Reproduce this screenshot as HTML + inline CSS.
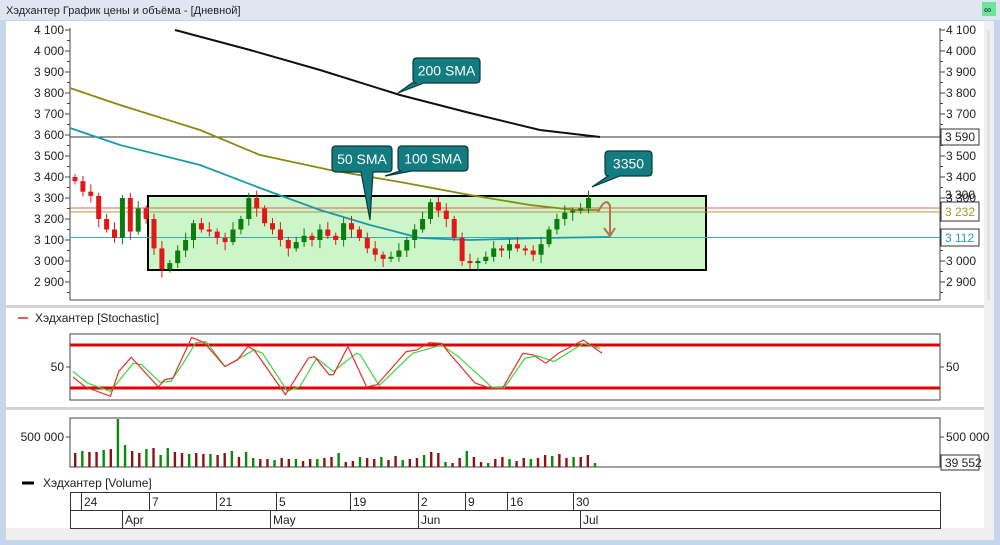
<!DOCTYPE html>
<html><head><meta charset="utf-8"><style>
html,body{margin:0;padding:0;width:1000px;height:545px;overflow:hidden;background:#c5d6ec;font-family:"Liberation Sans","DejaVu Sans",sans-serif}
svg{display:block}
text{font-family:"Liberation Sans","DejaVu Sans",sans-serif}
</style></head><body>
<svg id="s" width="1000" height="545" xmlns="http://www.w3.org/2000/svg">
<rect x="0" y="0" width="1000" height="545" fill="#c5d6ec"/>
<rect x="0" y="0" width="1000" height="20" fill="#dfe6f0"/>
<text x="6" y="14" font-size="11" fill="#222">Хэдхантер График цены и объёма - [Дневной]</text>
<rect x="982" y="2" width="14" height="14" fill="#6ee39a"/>
<text x="984" y="13" font-size="10" fill="#115">∞</text>
<rect x="6" y="21" width="978" height="512" fill="#ffffff"/>
<rect x="984" y="21" width="10" height="512" fill="#f0f0f0"/>
<rect x="987" y="30" width="3" height="270" fill="#e2e2e2"/>
<rect x="6" y="528" width="988" height="12" fill="#efefef"/>
<rect x="6" y="305" width="978" height="3" fill="#d4d4d4"/>
<rect x="6" y="407" width="978" height="3" fill="#d4d4d4"/>
<g id="g"></g>
</svg>
<script>
const NS="http://www.w3.org/2000/svg",G=document.getElementById("g");
function el(t,a,txt){const e=document.createElementNS(NS,t);for(const k in a)e.setAttribute(k,a[k]);if(txt!=null)e.textContent=txt;G.appendChild(e);return e;}
const L=70,R=940;
const Y=v=>30+(4100-v)*0.21;
// main plot frame
el("line",{x1:L,y1:28,x2:L,y2:300,stroke:"#444"});
el("line",{x1:R,y1:28,x2:R,y2:300,stroke:"#444"});
el("line",{x1:L,y1:300,x2:R,y2:300,stroke:"#444"});
for(let v=2900;v<=4100;v+=100){const y=Y(v);const s=v.toString().replace(/(\d)(\d{3})$/,"$1 $2");
 el("line",{x1:L-5,y1:y,x2:L,y2:y,stroke:"#444"});el("line",{x1:R,y1:y,x2:R+5,y2:y,stroke:"#444"});
 el("line",{x1:L-3,y1:y+10.5,x2:L,y2:y+10.5,stroke:"#444"});el("line",{x1:R,y1:y+10.5,x2:R+3,y2:y+10.5,stroke:"#444"});
 el("text",{x:L-6,y:y+4,"font-size":12,"text-anchor":"end",fill:"#222"},s);
 if(v!=3600&&v!=3100&&v!=3200)el("text",{x:R+6,y:y+4,"font-size":12,fill:"#222"},s);}
// green box
el("rect",{x:148,y:196,width:558,height:74,fill:"#ccf5c8",stroke:"#000","stroke-width":2});
// horizontal lines
el("line",{x1:L,y1:137,x2:R,y2:137,stroke:"#333"});
el("line",{x1:L,y1:208,x2:R,y2:208,stroke:"#e06060"});
el("line",{x1:L,y1:212,x2:R,y2:212,stroke:"#a8a040"});
el("line",{x1:L,y1:237.5,x2:R,y2:237.5,stroke:"#3aaab8"});
el("rect",{x:941,y:129,width:38,height:16,fill:"#fff",stroke:"#333"});
el("text",{x:945,y:141,"font-size":12,fill:"#222"},"3 590");
el("text",{x:945,y:199,"font-size":12,fill:"#222"},"3 300");
el("rect",{x:941,y:202,width:38,height:19,fill:"#fff",stroke:"#333"});
el("text",{x:945,y:216,"font-size":12,fill:"#a09830"},"3 232");
el("rect",{x:941,y:229,width:38,height:17,fill:"#fff",stroke:"#333"});
el("text",{x:945,y:242,"font-size":12,fill:"#2aa0b0"},"3 112");
// SMAs
const pl=(pts,c,w)=>el("polyline",{points:pts.map(p=>p.join(",")).join(" "),fill:"none",stroke:c,"stroke-width":w});
pl([[175,30],[250,50],[320,70],[400,95],[470,113],[540,130],[600,137]],"#111",2);
pl([[70,88],[120,105],[200,130],[260,155],[330,170],[400,182],[470,195],[530,205],[575,210],[600,210]],"#8a8a10",1.8);
pl([[70,128],[120,145],[200,165],[260,188],[320,210],[370,225],[420,238],[470,240],[540,238],[610,237]],"#1a9aaa",1.8);
// candles
const cl=[3380,3330,3310,3200,3150,3110,3300,3140,3250,3200,3060,2960,2990,3050,3100,3180,3150,3140,3110,3090,3150,3200,3300,3250,3180,3150,3100,3060,3090,3120,3100,3150,3120,3100,3180,3150,3110,3060,3030,3010,3020,3050,3100,3150,3200,3280,3240,3200,3110,3000,2990,3000,3020,3060,3050,3080,3060,3050,3030,3080,3150,3200,3230,3240,3250,3300];
let prev=3400;
cl.forEach((c,i)=>{const x=75+i*7.9;const o=prev;const up=c>=o;const col=up?"#0a7d0a":"#e01818";
 const hi=Math.max(o,c)+15+(i%3)*10,lo=Math.min(o,c)-15-(i%4)*8;
 el("line",{x1:x,y1:Y(hi),x2:x,y2:Y(lo),stroke:col});
 el("rect",{x:x-2.5,y:Y(Math.max(o,c)),width:5,height:Math.max(2,Math.abs(Y(o)-Y(c))),fill:col});prev=c;});
// brown arrow
el("path",{d:"M598 212 Q606 196 610 206 L610 236 M604 228 L610 236 L615 228",fill:"none",stroke:"#b87050","stroke-width":2});
// callouts
function co(x,y,w,h,t,px,py,ax){el("path",{d:`M${x+4} ${y}H${x+w-4}Q${x+w} ${y} ${x+w} ${y+4}V${y+h-4}Q${x+w} ${y+h} ${x+w-4} ${y+h}H${ax+12}L${px} ${py}L${ax} ${y+h}H${x+4}Q${x} ${y+h} ${x} ${y+h-4}V${y+4}Q${x} ${y} ${x+4} ${y}Z`,fill:"#127c80",stroke:"#0a3a3a","stroke-width":1.2});
 el("text",{x:x+w/2,y:y+h/2+5,"font-size":14,"text-anchor":"middle",fill:"#fff"},t);}
co(413,58,67,25,"200 SMA",398,93,412);
co(332,146,60,26,"50 SMA",370,220,361);
co(398,146,70,25,"100 SMA",385,176,400);
co(605,151,47,25,"3350",592,187,608);
// stochastic
el("line",{x1:18,y1:318,x2:28,y2:318,stroke:"#e06060","stroke-width":2});
el("text",{x:35,y:322,"font-size":12,fill:"#222"},"Хэдхантер [Stochastic]");
el("rect",{x:L,y:334,width:R-L,height:66,fill:"none",stroke:"#444"});
el("line",{x1:L,y1:345,x2:R,y2:345,stroke:"#e00000","stroke-width":3});
el("line",{x1:L,y1:388,x2:R,y2:388,stroke:"#e00000","stroke-width":3});
el("line",{x1:L-4,y1:367,x2:L,y2:367,stroke:"#444"});el("line",{x1:R,y1:367,x2:R+4,y2:367,stroke:"#444"});
el("text",{x:L-6,y:371,"font-size":12,"text-anchor":"end",fill:"#222"},"50");
el("text",{x:R+6,y:371,"font-size":12,fill:"#222"},"50");
const sm=a=>a.map(p=>[p[0]/2.4,345+(p[1]-135)*43/130]);
pl(sm([[175,215],[210,250],[265,275],[320,190],[340,195],[385,248],[410,245],[440,190],[470,128],[495,125],[540,200],[610,150],[630,160],[690,275],[720,260],[760,175],[800,215],[855,160],[865,165],[910,258],[990,160],[1060,135],[1100,170],[1180,262],[1210,265],[1260,175],[1290,168],[1330,185],[1400,130],[1440,145]]),"#3cd83c",1.2);
pl(sm([[175,232],[205,262],[265,290],[285,215],[315,172],[380,262],[395,240],[415,235],[460,112],[490,128],[540,200],[570,180],[595,140],[610,150],[685,285],[740,175],[755,170],[790,225],[800,225],[835,140],[880,262],[905,255],[975,155],[1000,150],[1030,128],[1060,130],[1075,155],[1140,250],[1175,265],[1205,268],[1255,160],[1280,165],[1310,190],[1340,160],[1400,120],[1445,160]]),"#e03030",1.2);
// volume
el("rect",{x:L,y:418,width:R-L,height:49,fill:"none",stroke:"#444"});
el("line",{x1:L-4,y1:437,x2:L,y2:437,stroke:"#444"});el("line",{x1:R,y1:437,x2:R+4,y2:437,stroke:"#444"});
el("text",{x:L-6,y:441,"font-size":12,"text-anchor":"end",fill:"#222"},"500 000");
el("text",{x:R+6,y:441,"font-size":12,fill:"#222"},"500 000");
el("rect",{x:941,y:455,width:38,height:15,fill:"#fff",stroke:"#333"});
el("text",{x:945,y:467,"font-size":12,fill:"#222"},"39 552");
const vh=[14,16,15,15,17,18,48,22,16,14,18,19,12,19,15,14,13,14,13,13,12,14,16,10,15,9,8,8,7,9,8,8,6,8,8,9,10,14,5,6,10,9,8,10,7,11,7,8,9,12,15,14,5,4,9,16,10,5,4,8,10,8,6,9,8,9,12,11,13,9,10,10,12,4];
vh.forEach((h,i)=>{const x=75+i*7.12;el("rect",{x:x-1,y:467-h,width:2.4,height:h,fill:(i%3==1||i==6||i==12||i==24)?"#0a8a0a":"#8a1414"});});
// legend volume
el("line",{x1:22,y1:483,x2:34,y2:483,stroke:"#000","stroke-width":3});
el("text",{x:43,y:487,"font-size":12,fill:"#222"},"Хэдхантер [Volume]");
// date axis
el("rect",{x:L+0.5,y:492.5,width:R-L,height:36,fill:"none",stroke:"#333"});
el("line",{x1:L,y1:510.5,x2:R,y2:510.5,stroke:"#333"});
[[81,"24"],[149,"7"],[216,"21"],[276,"5"],[350,"19"],[418,"2"],[465,"9"],[507,"16"],[573,"30"]].forEach(([x,t])=>{el("line",{x1:x+.5,y1:492,x2:x+.5,y2:510,stroke:"#333"});el("text",{x:x+3,y:506,"font-size":12,fill:"#222"},t);});
[[122,"Apr"],[270,"May"],[418,"Jun"],[580,"Jul"]].forEach(([x,t])=>{el("line",{x1:x+.5,y1:510,x2:x+.5,y2:528,stroke:"#333"});el("text",{x:x+3,y:524,"font-size":12,fill:"#222"},t);});
</script>
</body></html>
